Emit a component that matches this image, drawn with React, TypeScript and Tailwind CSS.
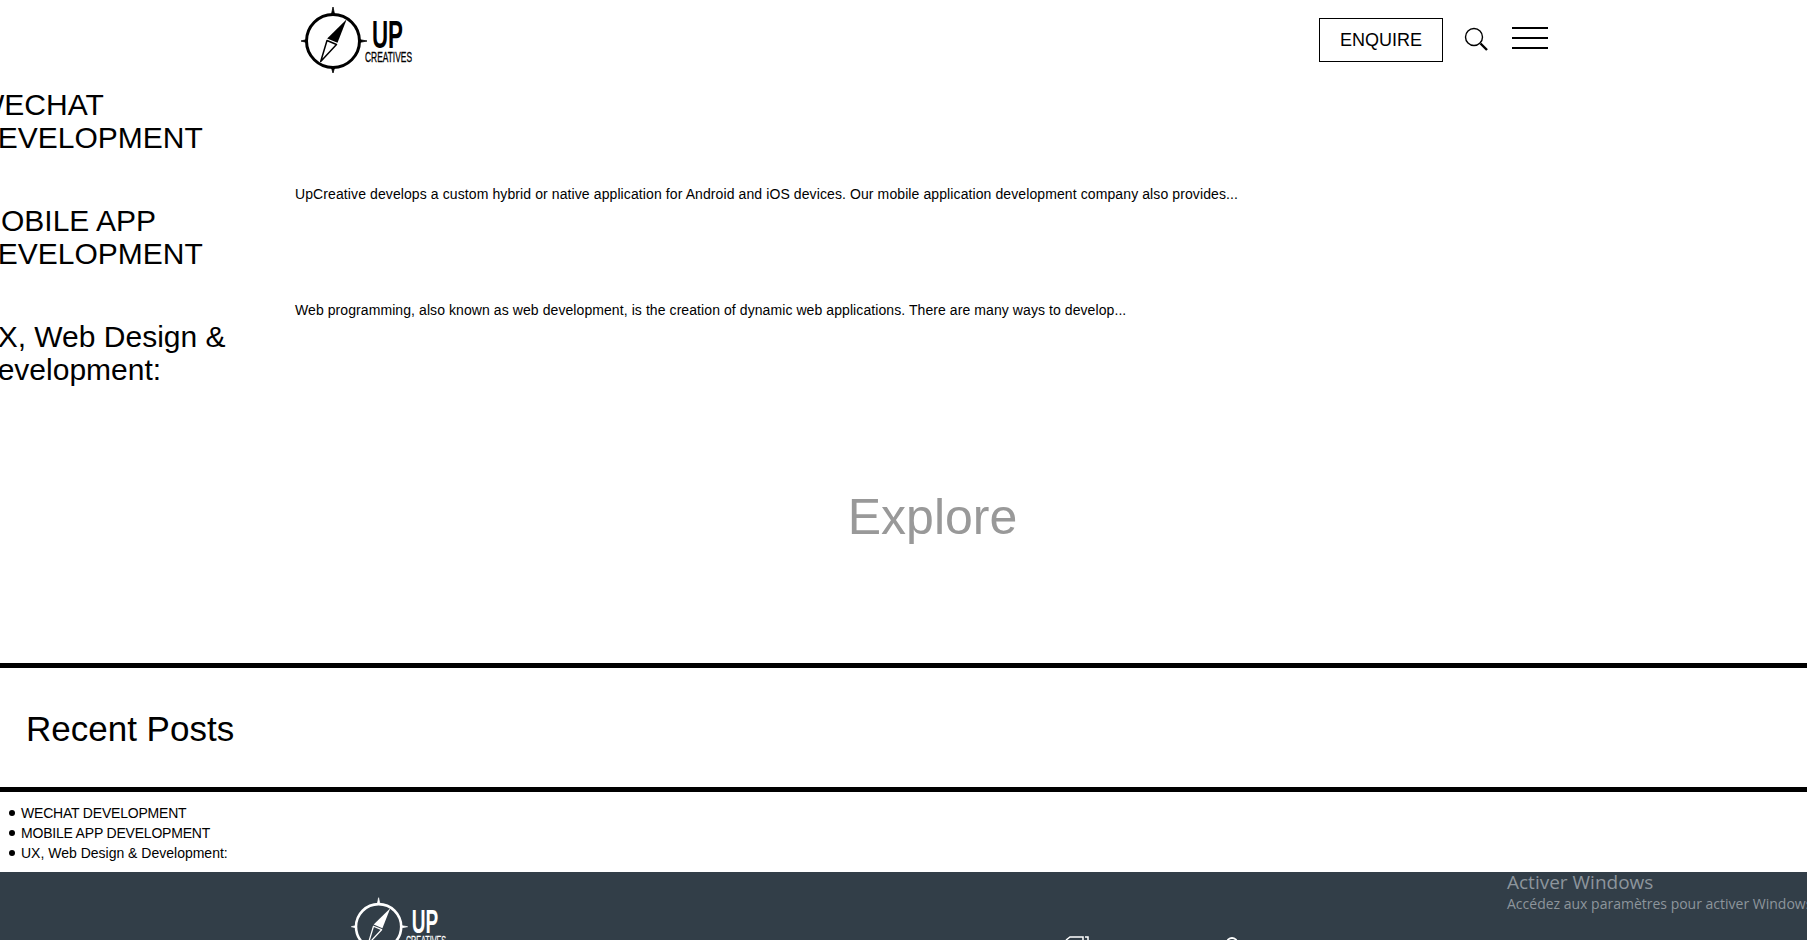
const sans = { fontFamily: '"Liberation Sans", Arial, sans-serif' };

function Logo({ color, className }: { color: string; className: string }) {
  return (
    <svg viewBox="0 0 115 68" className={className} fill="none">
      <circle cx="33" cy="36" r="26.5" stroke={color} strokeWidth="3" />
      <path d="M31.5 9 L33 2 L34.5 9 Z M31.5 63 L33 68 L34.5 63 Z M7 34.5 L1 36 L7 37.5 Z M59 34.5 L67 36 L59 37.5 Z" fill={color} stroke={color} strokeWidth="0.8" />
      <path d="M46.7 14.3 L27.2 33.5 L37.5 37.7 Z" fill={color} />
      <path d="M27 35.5 L36.5 39.5 L20.7 56.5 Z" stroke={color} strokeWidth="1.5" strokeLinejoin="round" />
      <text x="72" y="43" fontFamily="Liberation Sans, sans-serif" fontWeight="700" fontSize="39" fill={color} textLength="31" lengthAdjust="spacingAndGlyphs">UP</text>
      <text x="65" y="57" fontFamily="Liberation Sans, sans-serif" fontWeight="400" fontSize="14" stroke={color} strokeWidth="0.3" fill={color} textLength="47" lengthAdjust="spacingAndGlyphs">CREATIVES</text>
    </svg>
  );
}

function Row({ lines, text, track }: { lines: string[]; text: string; track: string }) {
  return (
    <div className="flex h-[116px] items-start">
      <h2 className="-ml-[24px] w-[319px] shrink-0 text-[30px] leading-[33px] text-black font-normal">
        {lines.map((l) => (
          <div key={l}>{l}</div>
        ))}
      </h2>
      <p className={`mt-[96px] text-[14px] leading-[20px] text-black whitespace-nowrap ${track}`}>{text}</p>
    </div>
  );
}

function Post({ children, track }: { children: string; track: string }) {
  return (
    <li className={`flex h-[20px] items-center gap-[6px] pl-[9px] ${track}`}>
      <span className="h-[6px] w-[6px] rounded-full bg-black" />
      <span>{children}</span>
    </li>
  );
}

export default function App() {
  return (
    <div className="relative h-[940px] w-full overflow-hidden bg-white" style={sans}>
      <header className="flex h-[88px] items-center justify-between pl-[300px] pr-[259px]">
        <Logo color="#000" className="-mt-[10px] h-[68px] w-[115px]" />
        <div className="-mt-[8px] flex items-center">
          <button className="h-[44px] w-[124px] border border-black text-[18px] text-black">ENQUIRE</button>
          <svg viewBox="0 0 24 24" className="ml-[21px] -mt-[2px] h-[24px] w-[24px]" fill="none" stroke="#000">
            <circle cx="10" cy="10" r="8.5" strokeWidth="1.4" />
            <path d="M16.5 16.5 L23 23" strokeWidth="2.4" />
          </svg>
          <div className="ml-[24px] -mt-[4px] flex w-[36px] flex-col gap-[8px]">
            <div className="h-[2px] bg-black" />
            <div className="h-[2px] bg-black" />
            <div className="h-[2px] bg-black" />
          </div>
        </div>
      </header>

      <section>
        <Row
          track="tracking-[0.1px]"
          lines={["WECHAT", "DEVELOPMENT"]}
          text="UpCreative develops a custom hybrid or native application for Android and iOS devices. Our mobile application development company also provides..."
        />
        <Row
          track="tracking-[0.08px]"
          lines={["MOBILE APP", "DEVELOPMENT"]}
          text="Web programming, also known as web development, is the creation of dynamic web applications. There are many ways to develop..."
        />
        <Row track="" lines={["UX, Web Design &", "Development:"]} text="" />
      </section>

      <div className="flex h-[227px] items-start justify-center pt-[53px]">
        <span className="ml-[58px] text-[50px] leading-[56px] text-[#999]">Explore</span>
      </div>

      <div className="flex h-[129px] items-center border-y-[5px] border-black pl-[26px] pt-[3px]">
        <h2 className="text-[35px] font-normal text-black">Recent Posts</h2>
      </div>

      <ul className="h-[80px] pt-[11px] text-[14px] leading-[20px] text-black">
        <Post track="tracking-[-0.2px]">WECHAT DEVELOPMENT</Post>
        <Post track="tracking-[-0.2px]">MOBILE APP DEVELOPMENT</Post>
        <Post track="">UX, Web Design &amp; Development:</Post>
      </ul>

      <footer className="flex h-[68px] items-start bg-[#323e48] pl-[350px] pt-[24px]">
        <Logo color="#fff" className="h-[58px] w-[99px] shrink-0" />
        <svg viewBox="0 0 24 24" className="ml-[616px] mt-[40px] h-[24px] w-[24px] shrink-0" fill="none" stroke="#fff" strokeWidth="1.5">
          <path d="M1 4 L5 1 H18 V7 M20 1 H23 V8" />
        </svg>
        <svg viewBox="0 0 24 24" className="ml-[131px] mt-[40px] h-[24px] w-[24px] shrink-0" fill="none" stroke="#fff" strokeWidth="2">
          <circle cx="12" cy="7" r="5" />
        </svg>
      </footer>

      <div className="absolute left-[1507px] top-[870px] whitespace-nowrap text-[#8d959c]" style={{ fontFamily: '"Open Sans", sans-serif' }}>
        <div className="text-[19px] leading-[24px]">Activer Windows</div>
        <div className="text-[14px] leading-[20px]">Accédez aux paramètres pour activer Windows.</div>
      </div>
    </div>
  );
}
